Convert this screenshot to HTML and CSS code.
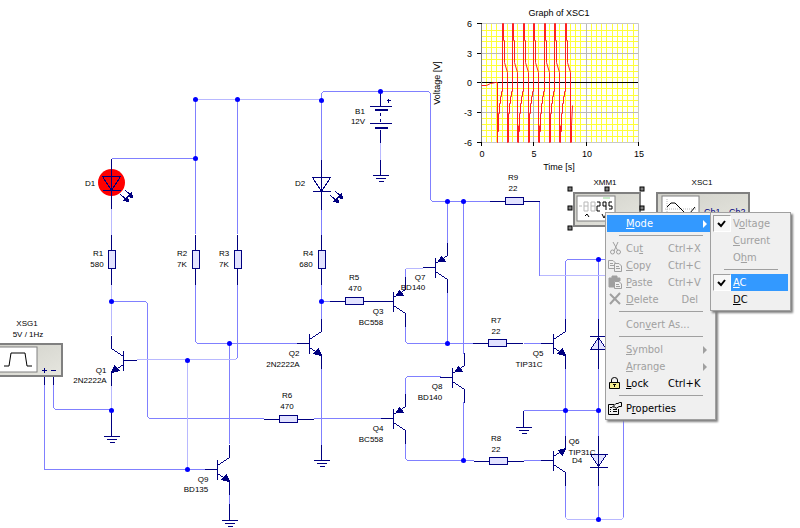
FILE: index.html
```html
<!DOCTYPE html>
<html lang="en">
<head>
<meta charset="utf-8">
<title>Circuit schematic</title>
<link rel="stylesheet" href="styles.css">
</head>
<body>
<main class="workspace">
<svg class="schematic" role="img" aria-label="Circuit schematic">
  <defs>
    <linearGradient id="panel" x1="0" y1="0" x2="1" y2="1"><stop offset="0" stop-color="#d0d0c9"/><stop offset="1" stop-color="#e6e6df"/></linearGradient>
    <g id="res-v"><path d="M0 -25V-9M0 9V25"/><rect class="body" x="-3" y="-9" width="7" height="18"/></g>
    <g id="res-h"><path d="M-25 0H-9M9 0H25"/><rect class="body" x="-9" y="-4" width="18" height="7"/></g>
    <g id="ground"><path d="M-8 0H8M-5 3H5M-2 6H3"/></g>
    <g id="npn"><path d="M-13 0H0M0 -10V10M0 -4L12 -12V-25M0 4L12 12V25"/><path class="solid" d="M12 12L4 10L9 5Z"/></g>
    <g id="npn-flip"><path d="M-13 0H0M0 -10V10M0 -4L12 -12V-25M0 4L12 12V25"/><path class="solid" d="M12 -12L5 -10L9 -5Z"/></g>
    <g id="pnp"><path d="M-13 0H0M0 -10V10M0 -4L12 -12V-25M0 4L12 12V25"/><path class="solid" d="M3 -6L6 -11L10 -6Z"/></g>
    <g id="led"><path d="M0 -25V25M-9 -7H9L0 7ZM-9 7H9"/><path d="M9 11L17 18M14 7L21 13"/><path class="solid" d="M17 18L12 17L16 13ZM21 14L16 13L20 9Z"/></g>
    <g id="diode"><path class="body" d="M-8 6H8L0 -6Z"/><path d="M0 -25V25M-9 -7H9M-9 6H9"/></g>
    <circle id="node" r="2.5"/>
    <rect id="handle" class="handle" x="-2" y="-2" width="4" height="4"/>
  </defs>

  <g transform="translate(.5 .5)">
    <circle class="lit" cx="111" cy="182" r="13.5"/>
    <g class="wires">
      <path d="M195 233V100M195 158H111M237 233V100M195 284V341L197 343H297M229 343V443M237 284V357L235 359M321 159V93L323 91H428L430 93V199L432 201H489M321 207V234M321 284V318M321 301H331"/>
      <path d="M539 201V275M111 301H145L147 303V416L149 418H263M313 418H380M44 384V469H204M53 384V407L55 409H111"/>
      <path d="M321 367V444M405 268V276M447 201V243M463 201V353M447 291V343M405 326V341L407 343H473M405 394V378L407 376H440M463 401V460M405 443V458L407 460H473M523 343H540M523 460H540"/>
      <path d="M565 318V261L567 259H610M565 367V436M598 259V318M598 367V436M523 410H598M598 485V519M565 485V517M623 517V400M229 493V503"/>
      <path class="pale" d="M195 99H321M111 207V234M111 284V334M136 359H235M187 359V469M111 384V410M380 142V159M405 268H422M539 275H610M565 517L567 519H621L623 517"/>
    </g>
    <g class="parts">
      <use href="#led" x="111" y="183"/><use href="#led" x="321" y="184"/>
      <use href="#res-v" x="111" y="259"/><use href="#res-v" x="195" y="259"/><use href="#res-v" x="237" y="259"/><use href="#res-v" x="321" y="259"/>
      <use href="#res-h" x="354" y="301"/><use href="#res-h" x="288" y="419"/><use href="#res-h" x="514" y="201"/><use href="#res-h" x="497" y="343"/><use href="#res-h" x="498" y="461"/>
      <path d="M379 301H393"/>
      <use href="#npn" transform="translate(123 360) scale(-1 1)"/>
      <use href="#npn" x="309" y="343"/><use href="#npn" x="217" y="469"/><use href="#npn" x="553" y="343"/>
      <use href="#npn-flip" x="553" y="460"/>
      <use href="#pnp" x="393" y="301"/><use href="#pnp" x="435" y="267"/><use href="#pnp" x="452" y="377"/><use href="#pnp" x="393" y="418"/>
      <use href="#diode" x="598" y="343"/><use href="#diode" transform="translate(598 460) scale(1 -1)"/>
      <path d="M111 410V436M321 444V460M229 503V520M523 410V427M380 91V106M380 129V142M380 159V175M44 376V384M53 376V384"/>
      <use href="#ground" x="111" y="436"/><use href="#ground" x="321" y="460"/><use href="#ground" x="229" y="520"/><use href="#ground" x="523" y="427"/><use href="#ground" x="380" y="175"/>
      <path d="M369 106H391M369 123H391M380 112V115M380 118V121M386 100H390M388 98V102"/>
      <path class="plate" d="M374 109H387M374 127H387"/>
    </g>
    <g class="nodes">
      <use href="#node" x="195" y="158"/><use href="#node" x="195" y="99"/><use href="#node" x="237" y="99"/><use href="#node" x="321" y="100"/><use href="#node" x="380" y="91"/>
      <use href="#node" x="447" y="201"/><use href="#node" x="463" y="201"/><use href="#node" x="111" y="301"/><use href="#node" x="321" y="301"/><use href="#node" x="229" y="343"/>
      <use href="#node" x="447" y="343"/><use href="#node" x="187" y="360"/><use href="#node" x="187" y="469"/><use href="#node" x="111" y="410"/><use href="#node" x="463" y="460"/>
      <use href="#node" x="565" y="410"/><use href="#node" x="598" y="410"/><use href="#node" x="598" y="259"/><use href="#node" x="598" y="519"/>
    </g>
  </g>

  <g class="label">
    <text x="90" y="186">D1</text><text x="300" y="186">D2</text>
    <text x="98" y="256">R1</text><text x="97" y="267">580</text>
    <text x="182" y="256">R2</text><text x="182" y="267">7K</text>
    <text x="224" y="256">R3</text><text x="224" y="267">7K</text>
    <text x="308" y="256">R4</text><text x="306" y="267">680</text>
    <text x="354" y="280">R5</text><text x="355" y="291">470</text>
    <text x="287" y="398">R6</text><text x="287" y="409">470</text>
    <text x="496" y="323">R7</text><text x="496" y="334">22</text>
    <text x="496" y="441">R8</text><text x="496" y="452">22</text>
    <text x="513" y="180">R9</text><text x="513" y="191">22</text>
    <text x="360" y="114">B1</text><text x="358" y="124">12V</text>
    <text x="101" y="373">Q1</text><text x="90" y="383">2N2222A</text>
    <text x="294" y="356">Q2</text><text x="283" y="367">2N2222A</text>
    <text x="378" y="314">Q3</text><text x="371" y="325">BC558</text>
    <text x="378" y="431">Q4</text><text x="371" y="442">BC558</text>
    <text x="538" y="356">Q5</text><text x="529" y="367">TIP31C</text>
    <text x="574" y="444">Q6</text><text x="582" y="455">TIP31C</text><text x="577" y="463">D4</text>
    <text x="420" y="280">Q7</text><text x="413" y="290">BD140</text>
    <text x="437" y="389">Q8</text><text x="430" y="400">BD140</text>
    <text x="203" y="482">Q9</text><text x="196" y="492">BD135</text>
    <text x="27" y="326">XSG1</text><text x="28" y="337">5V / 1Hz</text>
    <text x="605" y="185">XMM1</text><text x="702" y="185">XSC1</text>
  </g>

  <g class="instrument">
    <rect class="case" x="-4" y="344" width="66" height="32"/>
    <rect class="screen" x="-4" y="347" width="41" height="25"/>
    <path class="trace" d="M4 366H9L11 353H25L27 366H32"/>
    <path class="terminal" d="M42 370.500H47M44.500 368V373M51 370.500H56"/>
  </g>
  <g class="instrument">
    <rect class="case" x="574" y="193" width="66" height="33"/>
    <rect class="screen" x="577" y="196" width="38" height="25"/>
    <path class="segment-off" d="M579 206H582M584 202H588V206H584ZM584 206V211H588V206M591 202H595V206H591ZM591 206V211H595V206"/>
    <path class="trace" d="M597 202H600V206H597V211H600M603 202H606V206H603V202M606 206V210M612 202H609V206H612V209H609M585 216L587 214L589 217M602 214L604 218L606 214"/>
    <path class="lamp" d="M603 198H610"/>
    <use href="#handle" x="570" y="189"/><use href="#handle" x="607" y="189"/><use href="#handle" x="642" y="189"/>
    <use href="#handle" x="570" y="208"/><use href="#handle" x="642" y="208"/><use href="#handle" x="570" y="228"/>
  </g>
  <g class="instrument">
    <rect class="case" x="657" y="193" width="92" height="33"/>
    <rect class="screen" x="662" y="196" width="37" height="25"/>
    <path class="segment-off" d="M667 199V215M665 209H696" stroke-dasharray="1 1"/>
    <path class="trace" d="M667 207L671 203H675L685 213H690L695 207"/>
    <text class="channel" x="704" y="215">Ch1</text><text class="channel" x="729" y="215">Ch2</text>
  </g>

  <g class="graph">
    <path class="grid-line" d="M486.500 24V142M491.500 24V142M496.500 24V142M502.500 24V142M507.500 24V142M512.500 24V142M517.500 24V142M523.500 24V142M528.500 24V142M538.500 24V142M544.500 24V142M549.500 24V142M554.500 24V142M559.500 24V142M565.500 24V142M570.500 24V142M575.500 24V142M580.500 24V142M591.500 24V142M596.500 24V142M601.500 24V142M606.500 24V142M612.500 24V142M617.500 24V142M622.500 24V142M627.500 24V142M633.500 24V142"/>
    <path class="grid-line" d="M482 30.500H638M482 36.500H638M482 41.500H638M482 47.500H638M482 59.500H638M482 65.500H638M482 71.500H638M482 77.500H638M482 88.500H638M482 95.500H638M482 100.500H638M482 106.500H638M482 118.500H638M482 124.500H638M482 130.500H638M482 136.500H638"/>
    <path class="grid-major" d="M482 53.500H638M482 112.500H638M533.500 24V142M586.500 24V142"/>
    <path class="grid-edge" d="M482 23.500H638.500V142.500H482"/>
    <path class="axis" d="M477 23.500H482M477 53.500H482M477 82.500H638M477 112.500H482M477 142.500H482M481.500 142V146M533.500 142V146M586.500 142V146M638.500 142V146"/>
    <path class="axis-soft" d="M481.500 24V142"/>
    <g class="wave" transform="translate(.5 .5)">
      <path d="M481 85H486L490 83L495 82H497V142"/>
      <g id="cycle"><path d="M497 142V131H498V113H499V103H500V96H501V91H502V23H503V40H504V62L507 72V142"/></g>
      <use href="#cycle" x="10"/><use href="#cycle" x="21"/><use href="#cycle" x="31"/><use href="#cycle" x="42"/><use href="#cycle" x="52"/><use href="#cycle" x="63"/>
      <path d="M570 142L571 125L572 105"/>
      <path d="M508 142V125M518 142V125M529 142V125M539 142V125M550 142V125M560 142V125M571 142V125"/>
    </g>
    <text x="559" y="16">Graph of XSC1</text><text x="559" y="170">Time [s]</text>
    <text transform="translate(440 83) rotate(-90)">Voltage [V]</text>
    <text x="482" y="157">0</text><text x="534" y="157">5</text><text x="587" y="157">10</text><text x="639" y="157">15</text>
    <g class="ticks"><text x="472" y="27">6</text><text x="472" y="57">3</text><text x="472" y="86">0</text><text x="472" y="116">-3</text><text x="472" y="146">-6</text></g>
  </g>
</svg>

<div class="menu menu-main" role="menu">
  <button class="item item-active" role="menuitem"><span class="icon"></span><span class="name"><u>M</u>ode</span><span class="arrow"></span></button>
  <hr class="rule">
  <button class="item" role="menuitem" disabled><svg class="icon" viewBox="0 0 16 16"><path d="M5 1L10 10M10 1L6 10"/><circle cx="4.500" cy="11" r="2"/><circle cx="10.500" cy="11" r="2"/></svg><span class="name">Cu<u>t</u></span><span class="keys">Ctrl+X</span></button>
  <button class="item" role="menuitem" disabled><svg class="icon" viewBox="0 0 16 16"><path d="M.5 2.500H5L7.500 5V10.500H.5ZM2 5.500H5M2 7.500H6"/><path class="paper" d="M6.500 5.500H11L13.500 8V13.500H6.500Z"/><path d="M8 8.500H11M8 10.500H12"/></svg><span class="name"><u>C</u>opy</span><span class="keys">Ctrl+C</span></button>
  <button class="item" role="menuitem" disabled><svg class="icon" viewBox="0 0 16 16"><path class="fill" d="M1 3H4V1H9V3H12V6H6V12H1Z"/><path class="paper" d="M6.500 6.500H11L13.500 9V13.500H6.500Z"/><path d="M8 9.500H11M8 11.500H12"/></svg><span class="name"><u>P</u>aste</span><span class="keys">Ctrl+V</span></button>
  <button class="item" role="menuitem" disabled><svg class="icon" viewBox="0 0 16 16"><path class="heavy" d="M2 2L12 12M12 1L2 12"/></svg><span class="name"><u>D</u>elete</span><span class="keys keys-end">Del</span></button>
  <hr class="rule">
  <button class="item" role="menuitem" disabled><span class="icon"></span><span class="name">Con<u>v</u>ert As...</span></button>
  <hr class="rule">
  <button class="item" role="menuitem" disabled><span class="icon"></span><span class="name"><u>S</u>ymbol</span><span class="arrow"></span></button>
  <button class="item" role="menuitem" disabled><span class="icon"></span><span class="name"><u>A</u>rrange</span><span class="arrow"></span></button>
  <button class="item" role="menuitem"><svg class="icon" viewBox="0 0 16 16"><path d="M3.500 6V4Q3.500 1.500 6.500 1.500Q9.500 1.500 9.500 4V6"/><path class="gold" d="M1.500 6.500H11.500V12.500H1.500Z"/><path d="M5 8.500H8M6.500 8V11"/></svg><span class="name"><u>L</u>ock</span><span class="keys">Ctrl+K</span></button>
  <hr class="rule">
  <button class="item" role="menuitem"><svg class="icon" viewBox="0 0 16 16"><path d="M6 3.500H.5V13.500H10.500V8M2 6.500H4M2 8.500H3M5 8.500H9M2 10.500H3M5 10.500H9"/><path class="paper" d="M4.500 6L8 2.500H10L11.500 1.500H13.500V5.500H11L8 7.500L7 6Z"/></svg><span class="name">P<u>r</u>operties</span></button>
</div>

<div class="menu menu-sub" role="menu">
  <button class="item" role="menuitemradio" aria-checked="true" disabled><span class="tick"><svg viewBox="0 0 16 15"><path d="M4 7L7 10L11 5"/></svg></span><span class="name">V<u>o</u>ltage</span></button>
  <button class="item" role="menuitemradio" aria-checked="false" disabled><span class="tick-space"></span><span class="name"><u>C</u>urrent</span></button>
  <button class="item" role="menuitemradio" aria-checked="false" disabled><span class="tick-space"></span><span class="name">O<u>h</u>m</span></button>
  <hr class="rule">
  <button class="item item-checked" role="menuitemradio" aria-checked="true"><span class="tick"><svg viewBox="0 0 16 15"><path d="M4 7L7 10L11 5"/></svg></span><span class="name"><u>A</u>C</span></button>
  <button class="item" role="menuitemradio" aria-checked="false"><span class="tick-space"></span><span class="name"><u>D</u>C</span></button>
</div>
</main>
</body>
</html>
```
FILE: styles.css
```css
body {
  margin: 0;
  background: #fff;
}

.workspace {
  position: relative;
  min-height: 100vh;
  overflow: hidden;
}

.schematic {
  display: block;
  width: 100%;
  height: 100vh;
  font-family: "Liberation Sans", Arial, sans-serif;
}

/* Circuit drawing */
.wires path,
.parts {
  fill: none;
  stroke: #8080ff;
  shape-rendering: crispEdges;
}
.wires .pale { stroke: #b8b8ff; }
.parts { stroke: #000080; }
.body { fill: #e2e2ff; }
.solid { fill: #000080; }
.plate { stroke-width: 2; }
.nodes { fill: #0000ff; }
.lit { fill: #ff0000; }
.label {
  font-size: 8px;
  text-anchor: middle;
  fill: #000;
}

/* Instruments */
.instrument path {
  fill: none;
  stroke: #000;
}
.case {
  fill: url(#panel);
  stroke: #808080;
  stroke-width: 2;
}
.screen {
  fill: #fff;
  stroke: #808080;
}
.instrument .terminal { stroke: #000080; }
.instrument .segment-off { stroke: #b8b8b8; }
.instrument .lamp { stroke: #90d890; }
.channel {
  font-size: 9px;
  fill: #000080;
}
.handle {
  fill: #808080;
  stroke: #000;
}

/* Graph */
.grid-line {
  stroke: #ffff38;
  shape-rendering: crispEdges;
}
.grid-major { stroke: #b8b8b8; }
.grid-edge {
  fill: none;
  stroke: #c8c8c8;
}
.axis { stroke: #000; }
.axis-soft { stroke: #808080; }
.wave {
  fill: none;
  stroke: #ff2020;
}
.graph text {
  font-size: 9px;
  text-anchor: middle;
}
.graph .ticks text { text-anchor: end; }

/* Menus */
.menu {
  position: absolute;
  box-sizing: border-box;
  padding: 2px 2px 2px 1px;
  background: #f0f0f0;
  border: 1px solid #a0a0a0;
  box-shadow: 2px 2px 2px #808080;
  font: 11px/17px "DejaVu Sans Condensed", Tahoma, sans-serif;
}
.menu-main {
  left: 605px;
  top: 212px;
  width: 111px;
}
.menu-sub {
  left: 710px;
  top: 212px;
  width: 81px;
}
.item {
  display: flex;
  align-items: center;
  width: 100%;
  height: 17px;
  padding: 0;
  border: 0;
  background: none;
  color: #000;
  font: inherit;
  text-align: left;
  white-space: nowrap;
}
.item:disabled { color: #a0a0a0; }
.item-active {
  background: #3399ff;
  color: #fff;
}
.item-checked .name {
  background: #3399ff;
  color: #fff;
}
.name { flex: 1; }
.icon {
  flex: none;
  width: 16px;
  height: 16px;
  margin-left: 1px;
  margin-right: 2px;
}
.icon path,
.icon circle {
  fill: none;
  stroke: currentColor;
}
.icon .fill { fill: currentColor; }
.icon .paper { fill: #f0f0f0; }
.icon .heavy { stroke-width: 2; }
.icon .gold { fill: #f4ec90; }
.keys {
  width: 30px;
  margin-right: 15px;
}
.keys-end { text-align: right; }
.arrow {
  margin-right: 6px;
  border: 4px solid transparent;
  border-left-color: currentColor;
  border-right-width: 0;
}
.rule {
  height: 1px;
  margin: 3px 10px 4px 12px;
  border: 0;
  background: #a0a0a0;
}
.tick,
.tick-space {
  flex: none;
  width: 18px;
  height: 17px;
}
.tick {
  box-sizing: border-box;
  border: 1px solid #a0a0a0;
  border-right-color: #fff;
  border-bottom-color: #fff;
  background: #f7f7f7;
}
.menu-sub .item { padding-left: 1px; }
.menu-sub .name { padding-left: 2px; }
.tick svg {
  display: block;
  width: 16px;
  height: 15px;
}
.tick path {
  fill: none;
  stroke: #000;
  stroke-width: 2;
}
```
